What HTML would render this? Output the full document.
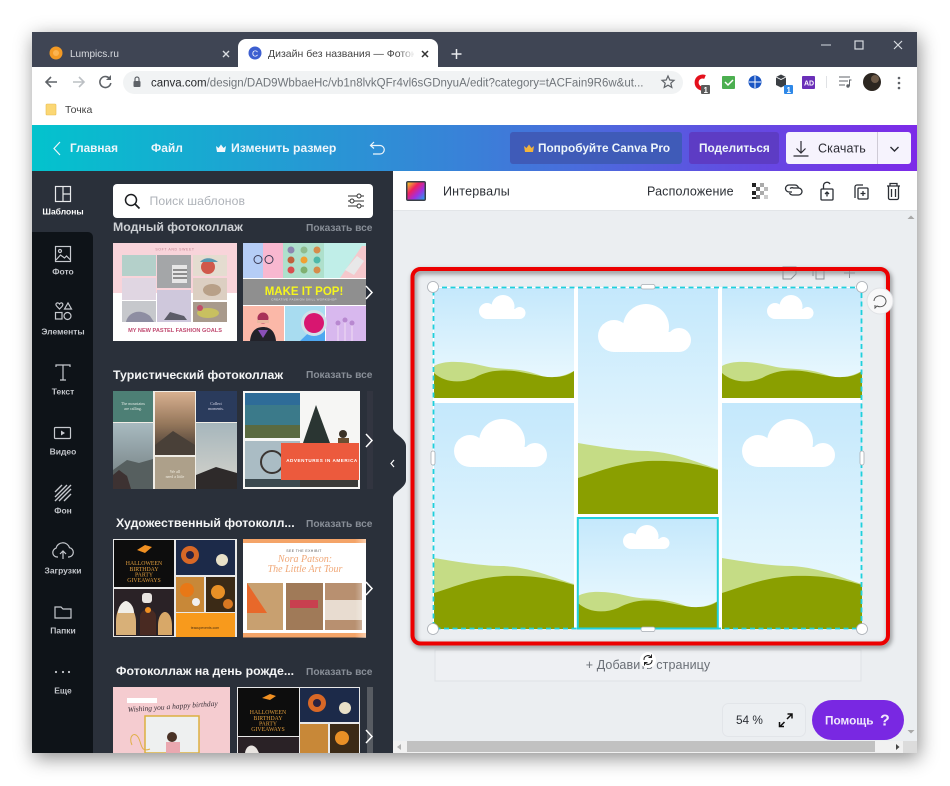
<!DOCTYPE html>
<html><head><meta charset="utf-8"><style>
html,body{margin:0;padding:0;background:#fff;width:950px;height:786px;overflow:hidden}
*{box-sizing:border-box}
body{font-family:"Liberation Sans",sans-serif;position:relative}
#w{position:absolute;left:32px;top:32px;width:885px;height:721px;box-shadow:2px 5px 18px rgba(0,0,0,.45)}
.a{position:absolute;white-space:nowrap}
svg{position:absolute;left:0;top:0}
</style></head><body>
<div id="w"></div>
<div class="a" style="left:32px;top:32px;width:885px;height:35px;background:#3f4554"></div>
<div class="a" style="left:238px;top:39px;width:200px;height:28px;background:#fff;border-radius:8px 8px 0 0"></div>
<div class="a" style="left:32px;top:67px;width:885px;height:58px;background:#fff"></div>
<div class="a" style="left:123px;top:71px;width:560px;height:23px;background:#f1f3f4;border-radius:12px"></div>
<div class="a" style="left:32px;top:125px;width:885px;height:46px;background:linear-gradient(90deg,#03c3cd 0%,#3a80d8 50%,#7d2ae8 100%)"></div>
<div class="a" style="left:32px;top:171px;width:61px;height:582px;background:#2a303a"></div>
<div class="a" style="left:32px;top:232px;width:61px;height:521px;background:#0e1318;border-radius:0 5px 0 0"></div>
<div class="a" style="left:93px;top:171px;width:300px;height:582px;background:#2a303a"></div>
<div class="a" style="left:393px;top:171px;width:524px;height:582px;background:#ebeef1"></div>
<div class="a" style="left:393px;top:171px;width:524px;height:40px;background:#fff;border-bottom:1px solid #e2e5e8"></div>
<div class="a" style="left:113px;top:184px;width:260px;height:34px;background:#fff;border-radius:4px"></div>
<div class="a" style="left:510px;top:132px;width:172px;height:32px;background:#3f5bb8;border-radius:3px"></div>
<div class="a" style="left:689px;top:132px;width:90px;height:32px;background:#5d3cc4;border-radius:3px"></div>
<div class="a" style="left:786px;top:132px;width:125px;height:32px;background:#f6f3fd;border-radius:3px"></div>
<div class="a" style="left:877px;top:132px;width:1px;height:32px;background:#cfcbd6"></div>

<svg width="950" height="786" viewBox="0 0 950 786">
<defs>
<linearGradient id="sky" x1="0" y1="0" x2="0" y2="1"><stop offset="0" stop-color="#c4e8fc"/><stop offset="1" stop-color="#f0fbfe"/></linearGradient>
<linearGradient id="fadeW" x1="0" y1="0" x2="1" y2="0"><stop offset="0" stop-color="#fff" stop-opacity="0"/><stop offset="1" stop-color="#fff"/></linearGradient>
<linearGradient id="g1" x1="0" y1="0" x2="0" y2="1"><stop offset="0" stop-color="#a8bac0"/><stop offset="1" stop-color="#6f7a7c"/></linearGradient>
<linearGradient id="g2" x1="0" y1="0" x2="0" y2="1"><stop offset="0" stop-color="#d8b090"/><stop offset=".5" stop-color="#96785c"/><stop offset="1" stop-color="#3e3630"/></linearGradient>
<linearGradient id="g3" x1="0" y1="0" x2="0" y2="1"><stop offset="0" stop-color="#a6b6bc"/><stop offset="1" stop-color="#d6d4cc"/></linearGradient>
<g id="cl"><circle cx="16" cy="32" r="16" fill="#fff"/><circle cx="48" cy="23" r="23" fill="#fff"/><circle cx="81" cy="36" r="12" fill="#fff"/><rect x="16" y="28" width="65" height="20" fill="#fff"/></g>
<g id="sm"><rect width="140" height="110" fill="url(#sky)"/><use href="#cl" transform="translate(45 7) scale(.5)"/>
<path d="M0 78C10 72 30 73 50 78C70 83 85 78 110 89C120 91 130 88 140 83V110H0Z" fill="#c5dc85"/>
<path d="M0 85C10 94 25 96 40 90C55 82 65 82 80 83C95 85 110 90 120 89C128 89 135 87 140 83V110H0Z" fill="#8a9f00"/></g>
<g id="tl"><rect width="140" height="226" fill="url(#sky)"/><use href="#cl" transform="translate(20 16)"/>
<path d="M0 155C30 160 50 163 70 163C100 165 120 175 140 181V226H0Z" fill="#c5dc85"/>
<path d="M0 190C20 184 40 175 70 173C100 172 120 176 140 182V226H0Z" fill="#8a9f00"/></g>
<clipPath id="pc"><rect x="93" y="171" width="300" height="582"/></clipPath>
<clipPath id="tc"><rect x="262" y="40" width="152" height="24"/></clipPath>
<filter id="bl" x="-5%" y="-5%" width="110%" height="110%"><feGaussianBlur stdDeviation=".35"/></filter>
<filter id="sh" x="-5%" y="-5%" width="110%" height="110%"><feGaussianBlur stdDeviation="2.5"/></filter>
</defs>

<!-- tab bar -->
<circle cx="56" cy="53" r="6.5" fill="#f39a24"/><circle cx="56" cy="53" r="3" fill="#fbb450"/>
<text x="70" y="57" font-size="10" fill="#d9dce1">Lumpics.ru</text>
<path d="M223 51l6 6M229 51l-6 6" stroke="#d9dce1" stroke-width="1.4"/>
<circle cx="255" cy="53" r="6.5" fill="#3d5fd0"/><text x="252" y="56.500" font-size="8.500" fill="#fff">C</text>
<g clip-path="url(#tc)"><text x="268" y="57" font-size="10.500" fill="#444">Дизайн без названия — Фотокс</text></g>
<rect x="398" y="42" width="17" height="20" fill="url(#fadeW)"/>
<path d="M422 51l6 6M428 51l-6 6" stroke="#333" stroke-width="1.500"/>
<path d="M451.500 54h10M456.500 49v10" stroke="#e8eaed" stroke-width="1.500"/>
<path d="M821 45h10" stroke="#aab0ba" stroke-width="1.400"/><rect x="855" y="41" width="8" height="8" fill="none" stroke="#d8dbe0" stroke-width="1.200"/>
<path d="M894 41l8 8M902 41l-8 8" stroke="#d8dbe0" stroke-width="1.200"/>

<!-- nav -->
<path d="M57 82H46M51 77l-5 5 5 5" fill="none" stroke="#5f6368" stroke-width="1.600"/>
<path d="M73 82H84M79 77l5 5-5 5" fill="none" stroke="#bcc0c4" stroke-width="1.600"/>
<path d="M110 79a5.500 5.500 0 1 0 .8 4" fill="none" stroke="#5f6368" stroke-width="1.600"/><path d="M111 75v5h-5z" fill="#5f6368"/>
<rect x="133.500" y="81" width="7" height="6" rx="1" fill="#5f6368"/><path d="M135 81v-2a2 2 0 0 1 4 0v2" fill="none" stroke="#5f6368" stroke-width="1.200"/>
<text x="151" y="86.500" font-size="11.500" fill="#70757a"><tspan fill="#26282b">canva.com</tspan>/design/DAD9WbbaeHc/vb1n8lvkQFr4vl6sGDnyuA/edit?category=tACFain9R6w&amp;ut...</text>
<path d="M668 76l1.800 4 4.200.4-3.200 2.800 1 4.200-3.800-2.200-3.800 2.200 1-4.200-3.200-2.800 4.200-.4z" fill="none" stroke="#5f6368" stroke-width="1.200"/>
<path d="M705 77a6 6 0 1 0 0 11" fill="none" stroke="#e4101c" stroke-width="4"/><rect x="701" y="85" width="9" height="9" rx="1" fill="#5b5b5b"/><text x="703.500" y="93" font-size="8" font-weight="bold" fill="#fff">1</text>
<rect x="722" y="76" width="13" height="13" rx="1" fill="#4caf50"/><path d="M725 82l3 3 5-5" fill="none" stroke="#fff" stroke-width="1.500"/>
<circle cx="755" cy="82" r="6.500" fill="#1a56c4"/><path d="M749 82h12M755 76v12" stroke="#fff" stroke-width="1"/>
<path d="M776 77l5-2.500 5 2.500v8l-5 2.500-5-2.500z" fill="#3b3f44"/><path d="M776 77l5 2.500 5-2.500" fill="none" stroke="#fff" stroke-width=".8"/><rect x="784" y="85" width="9" height="9" rx="1" fill="#2e88e8"/><text x="786.500" y="93" font-size="8" font-weight="bold" fill="#fff">1</text>
<rect x="802" y="76" width="13" height="13" rx="1" fill="#6a2fb8"/><text x="804" y="85.500" font-size="7" font-weight="bold" fill="#fff">AD</text>
<path d="M826.500 76v12" stroke="#e0e2e5"/>
<path d="M839 77h11M839 81h9M839 85h6" stroke="#5f6368" stroke-width="1.100"/><circle cx="848" cy="86" r="1.700" fill="#5f6368"/><path d="M849.500 86v-6h2" stroke="#5f6368" fill="none"/>
<circle cx="872" cy="82" r="9" fill="#2c2620"/><circle cx="875" cy="79" r="4" fill="#6d5a48"/>
<circle cx="899" cy="78" r="1.300" fill="#5f6368"/><circle cx="899" cy="83" r="1.300" fill="#5f6368"/><circle cx="899" cy="88" r="1.300" fill="#5f6368"/>
<rect x="46" y="104" width="10" height="11" rx="1" fill="#fbd774" stroke="#e8bd50" stroke-width=".6"/>
<text x="65" y="113" font-size="10.500" fill="#444">Точка</text>

<!-- canva header -->
<g font-weight="bold" fill="#eef6fb">
<path d="M60 142l-6 6.500 6 6.500" fill="none" stroke="#eef6fb" stroke-width="1.200"/>
<text x="70" y="152" font-size="11.800">Главная</text><text x="151" y="152" font-size="12">Файл</text>
<path d="M216 146l2.500 2 2.500-3.500 2.500 3.500 2.500-2-1 6h-8z" fill="#f5f8fb"/>
<text x="231" y="152" font-size="12.200">Изменить размер</text>
<path d="M374 142l-3.500 3.500 3.500 3M371 145.500h9a4 4 0 0 1 0 8.500h-7" fill="none" stroke="#eef6fb" stroke-width="1.200"/>
<path d="M524 146l2.500 2 2.500-3.500 2.500 3.500 2.500-2-1 6h-8z" fill="#f2b33c"/>
<text x="538" y="152" font-size="11.800">Попробуйте Canva Pro</text>
<text x="699" y="152" font-size="11.800">Поделиться</text></g>
<path d="M801 141v12M796.500 148.500l4.500 4.500 4.500-4.500M793.500 156h15" fill="none" stroke="#2b2b33" stroke-width="1.200"/>
<text x="818" y="152.500" font-size="12.500" fill="#2b2b33" letter-spacing=".15">Скачать</text>
<path d="M890.500 147l4 4 4-4" fill="none" stroke="#2b2b33" stroke-width="1.400"/>

<!-- sidebar -->
<g fill="none" stroke="#c6c9ce" stroke-width="1.200">
<rect x="55.500" y="186.500" width="15" height="15" stroke="#e8eaec"/><path d="M63 186.500v15M63 194h7.500" stroke="#e8eaec"/>
<rect x="55.500" y="246.500" width="15" height="15"/><circle cx="60" cy="251" r="1.500"/><path d="M56 260l4.500-5 4 3 2-2 4 4"/>
<path d="M57 306.500c-3-3 1-5 2.500-2.500 1.500-2.500 5-.5 2.500 2.500l-2.500 2.500z"/><path d="M64.500 309l3.500-6 3.500 6z"/><rect x="55.500" y="312.500" width="6.500" height="6.500"/><circle cx="67.500" cy="316" r="3.500"/>
<path d="M56 367v-2h14v2M63 365v15M60 380h6"/>
<rect x="54.500" y="427.500" width="16" height="11" rx="1"/>
<path d="M58 560h-1a4.500 4.500 0 0 1-1-8.800 7 7 0 0 1 13.500-.5 4.700 4.700 0 0 1-.5 9.300h-1M63 562v-8M60 557l3-3 3 3" transform="translate(0 -3)"/>
<path d="M55 607v11h16v-9h-8l-2-2z"/>
</g>
<path d="M61 430.500l4 2.500-4 2.500z" fill="#c6c9ce"/>
<path d="M55 492l7-7M55 497l12-12M55 501l16-16M59 501l12-12M64 501l7-7" stroke="#c6c9ce" stroke-width="1.400" fill="none"/>
<circle cx="56" cy="672" r="1.100" fill="#c6c9ce"/><circle cx="63" cy="672" r="1.100" fill="#c6c9ce"/><circle cx="69" cy="672" r="1.100" fill="#c6c9ce"/>
<g font-size="8.500" font-weight="bold" text-anchor="middle" fill="#c2c5ca">
<text x="63" y="214.500" fill="#fff">Шаблоны</text><text x="63" y="274.500">Фото</text><text x="63" y="334.500">Элементы</text><text x="63" y="394.500">Текст</text><text x="63" y="454.500">Видео</text><text x="63" y="513.500">Фон</text><text x="63" y="573.500">Загрузки</text><text x="63" y="633.500">Папки</text><text x="63" y="693.500">Еще</text></g>

<!-- search -->
<circle cx="131" cy="200" r="5.500" fill="none" stroke="#1b1d20" stroke-width="1.500"/><path d="M135 204l4.500 4.500" stroke="#1b1d20" stroke-width="1.700"/>
<text x="149.500" y="205" font-size="12.200" fill="#aeb2b8" letter-spacing=".1">Поиск шаблонов</text>
<path d="M348 196h16M348 201h16M348 206h16" stroke="#333" stroke-width="1"/><circle cx="359" cy="196" r="2" fill="#fff" stroke="#333"/><circle cx="352" cy="201" r="2" fill="#fff" stroke="#333"/><circle cx="359" cy="206" r="2" fill="#fff" stroke="#333"/>

<!-- panel headings -->
<g font-size="12.300" font-weight="bold" fill="#f4f5f6">
<text x="113" y="231" fill="#cdd0d4">Модный фотоколлаж</text>
<text x="113" y="379">Туристический фотоколлаж</text>
<text x="116" y="527">Художественный фотоколл...</text>
<text x="116" y="675">Фотоколлаж на день рожде...</text></g>
<g font-size="10.200" font-weight="bold" fill="#888e97">
<text x="306" y="231">Показать все</text><text x="306" y="378">Показать все</text><text x="306" y="527">Показать все</text><text x="306" y="675">Показать все</text></g>

<g clip-path="url(#pc)"><g filter="url(#bl)">
<!-- row1 t1 -->
<rect x="113" y="243" width="124" height="98" fill="#fff"/><rect x="113" y="243" width="124" height="50" fill="#f8d4da"/>
<text x="175" y="250.500" font-size="3.500" fill="#c08090" text-anchor="middle" letter-spacing=".6">SOFT AND SWEET</text>
<rect x="122" y="255" width="34" height="21" fill="#b4d0ca"/><rect x="122" y="278" width="34" height="22" fill="#e0d6e2"/><rect x="122" y="301" width="34" height="21" fill="#c6c8cc"/><path d="M126 322c2-10 14-14 24-6l4 6z" fill="#8e8ea2"/>
<rect x="157" y="255" width="34" height="33" fill="#a4a6a8"/><rect x="172" y="265" width="15" height="18" fill="#e6e6e6"/><path d="M173 270h14M173 274h14M173 278h14" stroke="#333"/>
<rect x="157" y="290" width="34" height="32" fill="#cfc8dc"/><path d="M164 320l6-8 14 4 3 4z" fill="#5c5c68"/>
<rect x="193" y="255" width="34" height="21" fill="#e4dcd0"/><circle cx="208" cy="267" r="7" fill="#d0584c"/><path d="M200 262c4-5 12-5 18 0z" fill="#5a98b0"/>
<rect x="193" y="278" width="34" height="22" fill="#dccfc2"/><ellipse cx="212" cy="290" rx="9" ry="6" fill="#b8a088"/>
<rect x="193" y="302" width="34" height="20" fill="#a89a8c"/><ellipse cx="208" cy="313" rx="11" ry="5" fill="#c8c060"/><circle cx="200" cy="308" r="3" fill="#c05068"/>
<text x="175" y="332" font-size="5.600" font-weight="bold" fill="#c04a70" text-anchor="middle">MY NEW PASTEL FASHION GOALS</text>
<!-- row1 t2 -->
<rect x="243" y="243" width="123" height="98" fill="#fff"/>
<rect x="243" y="243" width="20" height="35" fill="#b5cdf6"/><rect x="263" y="243" width="20" height="35" fill="#f8b8d0"/><rect x="283" y="243" width="41" height="35" fill="#aee0cc"/><rect x="324" y="243" width="42" height="35" fill="#c0eee8"/>
<path d="M340 278l22-32h4v32z" fill="#f5c8cc"/><path d="M345 270l12-14 7 5-10 14z" fill="#e8e8e8"/><circle cx="258" cy="259.500" r="4" fill="none" stroke="#3a3a55"/><circle cx="269" cy="259.500" r="4" fill="none" stroke="#3a3a55"/>
<g fill="#d58c4c"><circle cx="291" cy="250" r="3.500" fill="#8c88b0"/><circle cx="304" cy="250" r="3.500" fill="#8fbc8f"/><circle cx="317" cy="250" r="3.500"/><circle cx="291" cy="260" r="3.500" fill="#c0623c"/><circle cx="304" cy="260" r="3.500" fill="#f0a030"/><circle cx="317" cy="260" r="3.500" fill="#50b8a8"/><circle cx="291" cy="270" r="3.500" fill="#d85050"/><circle cx="304" cy="270" r="3.500" fill="#80b070"/><circle cx="317" cy="270" r="3.500"/></g>
<rect x="243" y="279" width="123" height="26" fill="#8f8f8f"/>
<text x="304" y="295" font-size="11.500" font-weight="bold" fill="#f5f51e" text-anchor="middle">MAKE IT POP!</text>
<text x="304" y="300.500" font-size="3" fill="#e0e0e0" text-anchor="middle" letter-spacing=".3">CREATIVE FASHION SKILL WORKSHOP</text>
<rect x="243" y="306" width="41" height="35" fill="#fbb8a8"/><rect x="285" y="306" width="40" height="35" fill="#a8dcf0"/><path d="M300 341l25-24v24z" fill="#4fa8f0"/><rect x="326" y="306" width="40" height="35" fill="#d8b8ee"/>
<circle cx="314" cy="323" r="13" fill="#d0e0e8"/><circle cx="314" cy="323" r="10" fill="#d81870"/>
<path d="M250 341c1-10 6-14 13-14s12 4 13 14z" fill="#20202c"/><path d="M258 330h10l-5 8z" fill="#8a50b8"/><circle cx="263" cy="318" r="5.500" fill="#a83058"/><rect x="257" y="320" width="12" height="3" fill="#e8b8a0"/>
<path d="M338 341v-18M345 341v-20M352 341v-18" stroke="#e8d0f0" stroke-width="1.500"/><circle cx="338" cy="323" r="2.500" fill="#b888d0"/><circle cx="345" cy="320" r="2.500" fill="#b888d0"/><circle cx="352" cy="323" r="2.500" fill="#b888d0"/>
<!-- row2 t1 -->
<rect x="113" y="391" width="124" height="98" fill="#f0ede6"/>
<rect x="113" y="391" width="40" height="31" fill="#4d7f74"/><rect x="196" y="391" width="41" height="31" fill="#2a3a5c"/>
<text x="133" y="405" font-size="4" fill="#dfe8e4" text-anchor="middle" font-family="Liberation Serif">The mountains</text><text x="133" y="410" font-size="4" fill="#dfe8e4" text-anchor="middle" font-family="Liberation Serif">are calling.</text>
<text x="216" y="405" font-size="4" fill="#dde" text-anchor="middle" font-family="Liberation Serif">Collect</text><text x="216" y="410" font-size="4" fill="#dde" text-anchor="middle" font-family="Liberation Serif">moments.</text>
<rect x="113" y="423" width="40" height="66" fill="url(#g1)"/><path d="M113 470l14-10 12 3 14-4v30h-40z" fill="#565e5e"/><path d="M113 489v-14l6-5 8 6 4 13z" fill="#3e3030"/>
<rect x="155" y="392" width="40" height="63" fill="url(#g2)"/><path d="M155 455v-10l18-14 22 14v10z" fill="#4a4038"/>
<rect x="155" y="457" width="40" height="32" fill="#ada08a"/>
<text x="175" y="473" font-size="4" fill="#f0ece0" text-anchor="middle" font-family="Liberation Serif">We all</text><text x="175" y="478" font-size="4" fill="#f0ece0" text-anchor="middle" font-family="Liberation Serif">need a little</text>
<rect x="196" y="423" width="41" height="66" fill="url(#g3)"/><path d="M196 489v-14l20-8 21 6v16z" fill="#2f2c2c"/>
<!-- row2 t2 -->
<rect x="243" y="391" width="117" height="98" fill="#f6f6f4"/>
<rect x="245" y="393" width="55" height="45" fill="#3a7a8a"/><rect x="245" y="393" width="55" height="12" fill="#2e6c98"/><rect x="245" y="425" width="55" height="13" fill="#5a6a40"/>
<path d="M316 405l14 38h-27z" fill="#2a3630"/><circle cx="343" cy="434" r="4" fill="#3a3028"/><rect x="338" y="438" width="11" height="6" fill="#6a5030"/>
<rect x="245" y="441" width="55" height="46" fill="#aabcc4"/><circle cx="272" cy="462" r="11" fill="none" stroke="#3a3430" stroke-width="2"/><rect x="245" y="479" width="55" height="8" fill="#3a4a50"/>
<rect x="300" y="480" width="58" height="7" fill="#3a3a38"/>
<rect x="281" y="443" width="78" height="37" fill="#ec5a3c"/>
<text x="322" y="462" font-size="4.600" font-weight="bold" fill="#fff" text-anchor="middle" letter-spacing=".55">ADVENTURES IN AMERICA</text>
<rect x="367" y="391" width="6" height="98" fill="#30363f"/>
<!-- row3 t1 -->
<rect x="113" y="539" width="124" height="98" fill="#e8e8e8"/>
<rect x="114" y="540" width="60" height="47" fill="#0a0808"/>
<path d="M137 550l8-5 7 2-7 6z" fill="#f09020"/>
<g font-family="Liberation Serif" font-size="5.800" fill="#e0a040" text-anchor="middle"><text x="144" y="565">HALLOWEEN</text><text x="144" y="571">BIRTHDAY</text><text x="144" y="576.500">PARTY</text><text x="144" y="582">GIVEAWAYS</text></g>
<rect x="114" y="589" width="60" height="47" fill="#2c2228"/><path d="M116 622c0-14 6-18 10-18s10 8 10 18v13h-20z" fill="#d8b078"/><path d="M118 613c0-8 6-12 8-12s8 4 8 12z" fill="#f0eee8"/><path d="M140 635v-18c0-6 6-8 8-8s8 2 8 8v18z" fill="#4a2a20"/><circle cx="148" cy="610" r="3" fill="#f09020"/><path d="M158 626c0-10 4-14 7-14s7 4 7 14v9h-14z" fill="#d8a868"/><rect x="142" y="593" width="10" height="10" rx="3" fill="#e8e4e0"/>
<rect x="176" y="540" width="59" height="35" fill="#1c2a4a"/><circle cx="190" cy="555" r="9" fill="#d86828"/><circle cx="190" cy="555" r="4" fill="#2a2040"/><circle cx="222" cy="560" r="6" fill="#e8e0c8"/>
<rect x="176" y="577" width="28" height="35" fill="#c88838"/><circle cx="187" cy="590" r="7" fill="#e87818"/><circle cx="196" cy="602" r="4" fill="#f0f0f0"/>
<rect x="206" y="577" width="29" height="35" fill="#3a2a18"/><circle cx="218" cy="592" r="7" fill="#e89028"/><circle cx="228" cy="604" r="5" fill="#d87820"/>
<rect x="176" y="613" width="59" height="24" fill="#f89a1e"/><text x="205" y="629" font-size="3.500" fill="#4a3010" text-anchor="middle">teacupevents.com</text>
<!-- row3 t2 -->
<rect x="243" y="539" width="123" height="98" fill="#fff"/><rect x="243" y="539" width="123" height="4" fill="#f4a468"/><rect x="243" y="633" width="123" height="4.500" fill="#f4a468"/>
<text x="304" y="552" font-size="3.500" fill="#555" text-anchor="middle" letter-spacing=".4">SEE THE EXHIBIT</text>
<g font-family="Liberation Serif" font-size="10" font-style="italic" fill="#f0a878" text-anchor="middle"><text x="305" y="562">Nora Patson:</text><text x="305" y="572">The Little Art Tour</text></g>
<rect x="247" y="583" width="36" height="47" fill="#c8a070"/><path d="M247 583l20 30-20 0z" fill="#e8682c"/><rect x="286" y="583" width="37" height="47" fill="#a07a58"/><rect x="290" y="600" width="28" height="8" fill="#c84050"/><rect x="325" y="583" width="37" height="47" fill="#b89070"/><rect x="325" y="600" width="37" height="20" fill="#e8dcd0"/>
<rect x="355" y="539" width="11" height="99" fill="url(#fadeW)" opacity=".45"/>
<!-- row4 t1 -->
<rect x="113" y="687" width="117" height="66" fill="#f5ccd0"/>
<text transform="rotate(-4 128 712)" x="128" y="712" font-size="7.500" font-style="italic" fill="#3a3038" font-family="Liberation Serif">Wishing you a happy birthday</text>
<rect x="127" y="698" width="30" height="5" fill="#fff"/>
<rect x="145" y="716" width="54" height="37" fill="#eef0f0" stroke="#dcb040" stroke-width="1.500"/><circle cx="172" cy="737" r="5" fill="#4a3028"/><rect x="166" y="742" width="14" height="11" fill="#eaa8b0"/>
<path d="M132 745c-4-8 2-14 6-8s2 16 12 12" fill="none" stroke="#e0b048"/>
<!-- row4 t2 -->
<rect x="237" y="687" width="123" height="66" fill="#e8e8e8"/>
<rect x="238" y="688" width="61" height="48" fill="#0a0808"/>
<path d="M262 698l8-4 6 2-6 4z" fill="#f09020"/>
<g font-family="Liberation Serif" font-size="5.800" fill="#e0a040" text-anchor="middle"><text x="268" y="714">HALLOWEEN</text><text x="268" y="720">BIRTHDAY</text><text x="268" y="725.500">PARTY</text><text x="268" y="731">GIVEAWAYS</text></g>
<rect x="238" y="737" width="61" height="16" fill="#2c2228"/><path d="M245 753c1-8 8-10 12-4l2 4z" fill="#e8e4e0"/>
<rect x="300" y="688" width="59" height="34" fill="#1c2a4a"/><circle cx="317" cy="703" r="9" fill="#d86828"/><circle cx="317" cy="703" r="4" fill="#2a2040"/><circle cx="345" cy="708" r="6" fill="#e8e0c8"/>
<rect x="300" y="724" width="28" height="29" fill="#c88838"/><rect x="330" y="724" width="29" height="29" fill="#3a2a18"/><circle cx="342" cy="738" r="7" fill="#e89028"/>
<rect x="367" y="687" width="6" height="66" fill="#585c62"/>
</g></g>
<g fill="none" stroke="#fff" stroke-width="1.500"><path d="M366 286l6 6.500-6 6.500"/><path d="M366 434l6 6.500-6 6.500"/><path d="M366 582l6 6.500-6 6.500"/><path d="M366 730l6 6.500-6 6.500"/></g>

<!-- collapse handle -->
<path d="M393 428c0 6 13 10 13 18v34c0 8-13 12-13 18z" fill="#2a303a"/>
<path d="M394 460l-3 3.500 3 3.500" fill="none" stroke="#fff" stroke-width="1.200"/>

<!-- canvas toolbar -->
<rect x="406" y="181" width="20" height="20" rx="2" fill="#3a3f48"/>
<defs><linearGradient id="rb" x1="0" y1="0" x2="1" y2="1"><stop offset="0" stop-color="#f0d020"/><stop offset=".35" stop-color="#f02060"/><stop offset=".65" stop-color="#a030e0"/><stop offset="1" stop-color="#20a0f0"/></linearGradient></defs>
<rect x="407.500" y="182.500" width="17" height="17" fill="url(#rb)"/>
<text x="443" y="195.500" font-size="12.500" fill="#2b2f35" letter-spacing=".2">Интервалы</text>
<text x="647" y="195.500" font-size="12.500" fill="#2b2f35" letter-spacing=".15">Расположение</text>
<g fill="#222"><rect x="752" y="183" width="4" height="4"/><rect x="760" y="183" width="4" height="4" fill="#aaa"/><rect x="756" y="187" width="4" height="4" fill="#666"/><rect x="764" y="187" width="4" height="4" fill="#bbb"/><rect x="752" y="191" width="4" height="4"/><rect x="760" y="191" width="4" height="4" fill="#aaa"/><rect x="756" y="195" width="4" height="4" fill="#777"/><rect x="764" y="195" width="4" height="4" fill="#ccc"/><rect x="752" y="197" width="4" height="2"/></g>
<g fill="none" stroke="#2b2f35" stroke-width="1.300">
<path d="M792 192h-3a3.500 3.500 0 0 1 0-7h6a3.500 3.500 0 0 1 3.500 3.500"/><path d="M790 188.500a3.500 3.500 0 0 1 3.500-.5h5a3.500 3.500 0 0 1 0 7h-6a3.500 3.500 0 0 1-3-2"/>
<rect x="821" y="189" width="12" height="11" rx="1"/><path d="M823.500 189v-3.500a3.500 3.500 0 0 1 6.500-1.500M827 192.500v4M825 194l2-2 2 2"/>
<path d="M855 198v-11a2 2 0 0 1 2-2h6"/><rect x="858" y="188" width="10" height="11" rx="1"/><path d="M863 191v5M860.500 193.500h5"/>
<path d="M887 186h13M890 186v-2.500h7v2.500M888.500 186v12a1.500 1.500 0 0 0 1.500 1.500h7a1.500 1.500 0 0 0 1.500-1.500v-12M891.500 189v8M895.500 189v8"/>
</g>

<!-- page -->
<rect x="433" y="287" width="429" height="342" fill="#fff"/>
<use href="#sm" x="434" y="288"/>
<use href="#tl" x="434" y="403"/>
<use href="#tl" x="578" y="288" clip-path="none"/>
<use href="#sm" x="722" y="288"/>
<use href="#tl" x="722" y="403"/>
<rect x="578" y="514" width="140" height="4" fill="#fff"/>
<g transform="translate(578 518)"><use href="#sm"/></g>
<rect x="577.800" y="518" width="140" height="110.500" fill="none" stroke="#20d0dc" stroke-width="2"/>
<rect x="433.500" y="287.500" width="428" height="341" fill="none" stroke="#1fd0dc" stroke-width="1.800" stroke-dasharray="5 3.500"/>
<g fill="#fff" stroke="#a8adb3" stroke-width=".8"><circle cx="433" cy="287" r="5.500"/><circle cx="862" cy="287" r="5.500"/><circle cx="433" cy="629" r="5.500"/><circle cx="862" cy="629" r="5.500"/>
<rect x="641" y="284.500" width="14" height="4.500" rx="2"/><rect x="641" y="627" width="14" height="4.500" rx="2"/><rect x="431" y="451" width="4" height="14" rx="2"/><rect x="860" y="451" width="4" height="14" rx="2"/></g>

<!-- add page -->
<rect x="435" y="650" width="426" height="31" fill="#eef0f3" stroke="#dfe2e6"/>
<text x="648" y="669" font-size="12.500" fill="#6a6f76" text-anchor="middle" letter-spacing=".1">+ Добавить страницу</text>
<circle cx="648" cy="660" r="8" fill="#fff"/><g fill="none" stroke="#222" stroke-width="1"><path d="M644 660a4 4 0 0 1 7-3"/><path d="M652 660a4 4 0 0 1-7 3"/><path d="M651.500 654.500v3h-3M644.500 665.500v-3h3"/></g>

<!-- red frame -->
<rect x="412.500" y="269" width="475.500" height="374.500" rx="8" fill="none" stroke="#000" stroke-opacity=".38" stroke-width="5" transform="translate(1.500 2.500)" filter="url(#sh)"/>
<g fill="none" stroke="#8c9096" stroke-width="1"><path d="M783 267h13v7l-5 5h-8z"/><rect x="816" y="268" width="8" height="11"/><path d="M813 267v9"/><path d="M849.500 267v11M844 273h11"/></g>
<rect x="412.500" y="269" width="475.500" height="374.500" rx="8" fill="none" stroke="#ec0000" stroke-width="4"/>
<circle cx="880" cy="301" r="13" fill="#f8f8f9" stroke="#e0e2e5"/><path d="M874 301a6 5.500 0 1 1 3 5l-2 2v-3" fill="none" stroke="#555" stroke-width="1"/>

<!-- zoom & help -->
<rect x="722.500" y="703.500" width="83" height="33" rx="6" fill="#eceff2" stroke="#e2e5e9"/>
<text x="736" y="724" font-size="11.800" fill="#2b2f35">54 %</text>
<path d="M787 719l5-5M787.500 714h4.500v4.500M784.500 722l-4.500 4.500M779.500 722v4.500h4.500" fill="none" stroke="#111" stroke-width="1.500"/>
<rect x="812" y="700" width="92" height="40" rx="20" fill="#7928e2"/>
<text x="825" y="724.500" font-size="11.800" font-weight="bold" fill="#f0e8fc">Помощь</text>
<text x="880" y="725.500" font-size="16" font-weight="bold" fill="#f0e8fc">?</text>

<!-- scrollbars -->
<rect x="393" y="741" width="524" height="12" fill="#f1f1f1"/>
<rect x="407" y="741" width="468" height="11" fill="#c1c1c1"/>
<rect x="903" y="741" width="14" height="12" fill="#dcdcdc"/>
<path d="M397 747l4-3v6z" fill="#b0b0b0"/><path d="M896 744l3.500 3-3.500 3z" fill="#444"/>
<path d="M907.500 730h7l-3.500 3.500z" fill="#a8a8a8"/><path d="M907.500 219h7l-3.500-3.500z" fill="#a8a8a8"/>
</svg>
</body></html>
